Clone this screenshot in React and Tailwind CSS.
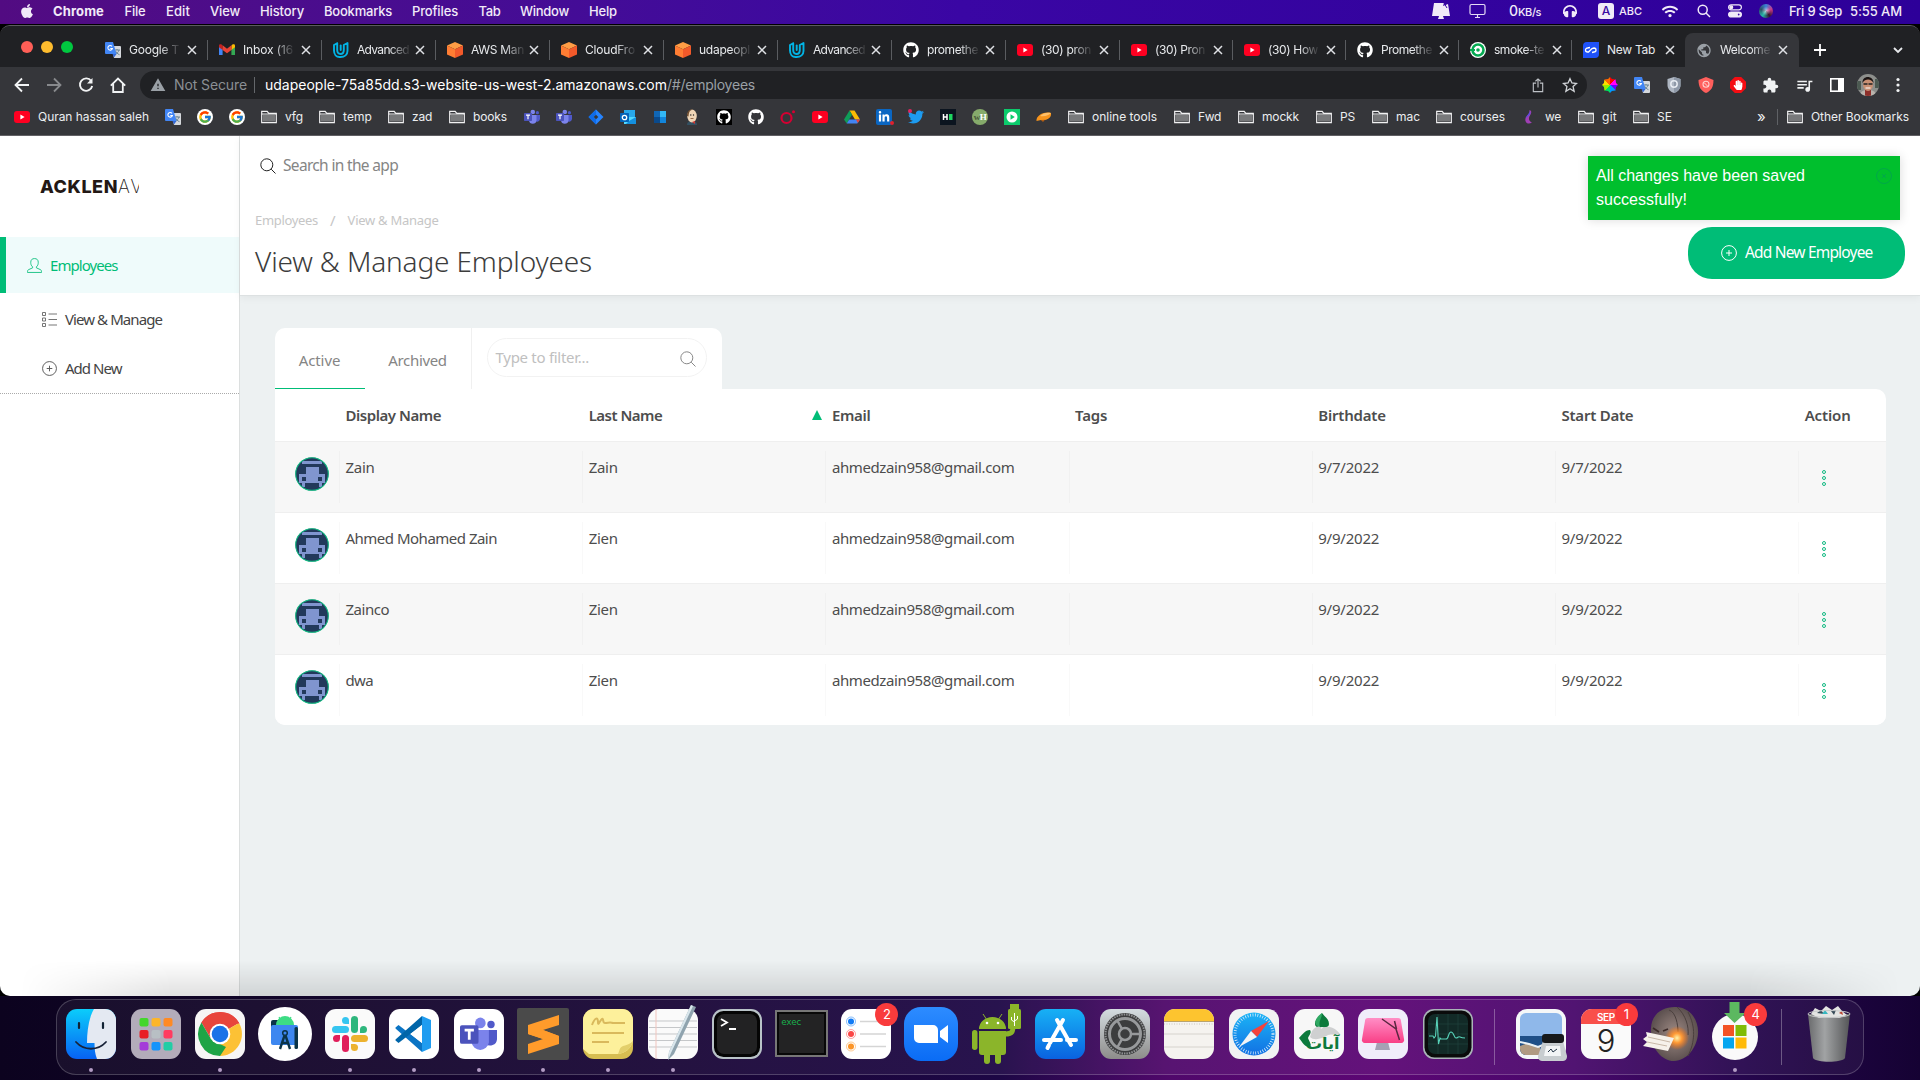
import React, { useLayoutEffect, useRef } from "react";
import { FaApple, FaGithub, FaTwitter, FaLinkedinIn, FaHeadphones, FaHandPaper, FaWifi } from "react-icons/fa";
import { FcGoogle } from "react-icons/fc";
import { MdExtension, MdOutlineQueueMusic, MdPublic, MdWarning } from "react-icons/md";

/* Text whose tracking is adjusted so that it spans a given width. */
function Fit({ w, className = "", children }) {
  const ref = useRef(null);
  useLayoutEffect(() => {
    const el = ref.current;
    el.style.letterSpacing = "0px";
    const natural = el.getBoundingClientRect().width;
    el.style.letterSpacing = `${(w - natural) / String(children).length}px`;
  }, [w, children]);
  return (
    <span ref={ref} className={`inline-block shrink-0 whitespace-pre ${className}`}>
      {children}
    </span>
  );
}

const Slot = ({ w, children, className = "" }) => (
  <div className={`flex shrink-0 items-center ${className}`} style={{ width: w }}>
    {children}
  </div>
);

/* ---------- small icons ---------- */
const YouTube = () => (
  <svg viewBox="0 0 16 16" className="size-4"><rect y="2" width="16" height="12" rx="3" fill="#ff0021" /><path d="M6.4 5.6v4.8L10.6 8z" fill="#fff" /></svg>
);
const Translate = () => (
  <svg viewBox="0 0 16 16" className="size-4">
    <path d="M6 4h9a1 1 0 0 1 1 1v10a1 1 0 0 1-1 1H9z" fill="#d5d8dc" />
    <path d="M9 8h6M12 7v1m2 0c-.5 2-2 3.500-4 4.500M10.500 9c.8 1.500 2 3 4 3.700" stroke="#607d8b" strokeWidth=".9" fill="none" />
    <path d="M1 0h7l3.500 12H1a1 1 0 0 1-1-1V1a1 1 0 0 1 1-1z" fill="#4286f5" />
    <path d="M7 4.400A2.300 2.300 0 1 0 7.400 6.500H5.300" stroke="#fff" strokeWidth="1.100" fill="none" />
    <path d="M7.500 12h4L9 15.500z" fill="#3367d6" />
  </svg>
);
const Gmail = () => (
  <svg viewBox="0 0 16 16" className="size-4">
    <path d="M0 4.500V13h3.600V7z" fill="#4285f4" /><path d="M16 4.500V13h-3.600V7z" fill="#34a853" />
    <path d="M0 3.500v1.800l3.600 2.700V3.800L2.600 2.600C1.500 2 0 2.400 0 3.500z" fill="#c5221f" />
    <path d="M16 3.500v1.800L12.400 8V3.800l1-1.200C14.500 2 16 2.400 16 3.500z" fill="#fbbc04" />
    <path d="M3.600 3.300 8 6.700l4.400-3.400V8L8 11.300 3.600 8z" fill="#ea4335" />
  </svg>
);
const Udacity = () => (
  <svg viewBox="0 0 16 16" className="size-4" fill="none" stroke="#02b3e4" strokeWidth="1.900" strokeLinejoin="round" strokeLinecap="round">
    <path d="M4.200 1.300 1 3v5.500c0 4 2.500 6.500 5.500 6.500M4.200 1.300V8c0 2.500 1.200 4 3.300 4s3.300-1.300 3.300-4V3L14.500 1v8c0 3.500-2.800 6-7 6" />
    <path d="M7.700 3.500V8" />
  </svg>
);
const Cube = () => (
  <svg viewBox="0 0 16 16" className="size-4">
    <path d="M8 0l8 3.600-8 3.600L0 3.600z" fill="#ff9d45" /><path d="M0 3.600l8 3.600V16l-8-3.600z" fill="#ff7d33" /><path d="M16 3.600L8 7.200V16l8-3.600z" fill="#f2592a" />
  </svg>
);
const Circle = () => (
  <svg viewBox="0 0 16 16" className="size-4"><circle cx="8" cy="8" r="8" fill="#fff" /><circle cx="8" cy="8" r="5.500" fill="none" stroke="#04aa51" strokeWidth="2.600" /><path d="M0 8h5" stroke="#04aa51" strokeWidth="2" /><circle cx="8" cy="8" r="1.800" fill="#04aa51" /></svg>
);
const NewTabIcon = () => (
  <svg viewBox="0 0 16 16" className="size-4"><path d="M4 0h12v12a4 4 0 0 1-4 4H0V4a4 4 0 0 1 4-4z" fill="#1f52fa" /><path d="M7 5.500 4.500 6a2 2 0 0 0 0 4h1L9 6.500 11 6a2 2 0 0 1 0 4l-2 .5" stroke="#fff" strokeWidth="1.300" fill="none" /></svg>
);
const Folder = () => (
  <svg viewBox="0 0 16 16" className="size-4"><path d="M.7 13.700V2.300h5.500l1.600 2h7.500v9.400z" fill="none" stroke="#f1f1f2" strokeWidth="1.200" /><path d="M2 5.800h12v6.600H2z" fill="#78797b" /><path d="M.7 5h14.600" stroke="#f1f1f2" /></svg>
);
const Teams = ({ className = "size-4" }) => (
  <svg viewBox="0 0 16 16" className={className}>
    <circle cx="8.800" cy="3" r="2.300" fill="#7b83eb" /><circle cx="13.400" cy="3.700" r="1.600" fill="#5059c9" />
    <path d="M11 6h5v4a3 3 0 0 1-5 2z" fill="#5059c9" /><path d="M5 6h7.500v5.500a3.800 3.800 0 0 1-7.500 0z" fill="#7b83eb" />
    <rect y="4" width="8" height="8" rx=".8" fill="#4b53bc" /><path d="M2 6.100h4M4 6v4.300" stroke="#fff" strokeWidth="1.200" />
  </svg>
);
const Jira = () => (
  <svg viewBox="0 0 16 16" className="size-4"><path d="M8 .5 15.500 8 8 15.500.5 8z" fill="#2684ff" /><path d="M8 .5v5L5.500 8 8 10.500v5L.5 8z" fill="#0f6be8" /><path d="M8 5.700 10.300 8 8 10.300 5.700 8z" fill="#35363a" /></svg>
);
const Outlook = () => (
  <svg viewBox="0 0 16 16" className="size-4"><path d="M4 1h11v7H4z" fill="#28a8ea" /><path d="M4 8h12v7H4z" fill="#50d9ff" /><path d="M9 12l7-4v7H6z" fill="#1490df" /><rect y="4" width="9" height="9" rx=".8" fill="#0364b8" /><circle cx="4.500" cy="8.500" r="2.200" fill="none" stroke="#fff" strokeWidth="1.300" /></svg>
);
const Squares = () => (
  <svg viewBox="0 0 16 16" className="size-4"><path d="M2 2h6v6H2z" fill="#1066b5" /><path d="M8 2h6v6H8z" fill="#32b8f5" /><path d="M2 8h6v6H2z" fill="#0a4a8c" /><path d="M8 8h6v6H8z" fill="#1286dc" /></svg>
);
const Jenkins = () => (
  <svg viewBox="0 0 16 16" className="size-4"><path d="M3 16c0-3 2-4 5-4s5 1 5 4z" fill="#335061" /><ellipse cx="8" cy="7" rx="4.800" ry="6.500" fill="#f0d6b7" /><path d="M3 7c0-5 2-7 6-6.500-4 1-4 3-4.500 7z" fill="#6d4c2f" /><circle cx="9.500" cy="6" r=".7" fill="#222" /><circle cx="6.800" cy="6" r=".7" fill="#222" /><path d="M6.500 9.500h3" stroke="#805030" strokeWidth=".8" /><path d="M8 13l3 2v-3z" fill="#d33833" /></svg>
);
const GithubBlack = () => <div className="flex size-4 items-center justify-center bg-black text-white"><FaGithub className="size-3.5" /></div>;
const Github = () => <FaGithub className="size-4 text-white" />;
const RedO = () => (
  <svg viewBox="0 0 16 16" className="size-4"><circle cx="6.500" cy="9" r="5" fill="none" stroke="#d50032" strokeWidth="2.200" /><circle cx="13.500" cy="2.800" r="1.500" fill="#d50032" /></svg>
);
const Drive = () => (
  <svg viewBox="0 0 16 16" className="size-4"><path d="M5.500 1.500h5L16 10.500h-5z" fill="#fbbc04" /><path d="M5.500 1.500 8 5.700 2.700 14.500 0 10.500z" fill="#0f9d58" /><path d="M5.200 10.500H16l-2.700 4H2.700z" fill="#4285f4" /><path d="M12 10.500h4l-2.200 3.500z" fill="#ea4335" /></svg>
);
const LinkedIn = () => (
  <div className="relative flex size-4 items-center justify-center rounded-[2px] bg-[#0a66c2] text-white"><FaLinkedinIn className="size-3" /><span className="absolute -right-0.5 bottom-0 size-1 rounded-full bg-[#e0202c]" /></div>
);
const Twitter = () => (
  <div className="relative size-4"><FaTwitter className="size-4 text-[#1d9bf0]" /><span className="absolute left-0 top-0 size-1 rounded-full bg-[#e0245e]" /></div>
);
const HackerRank = () => (
  <svg viewBox="0 0 16 16" className="size-4"><rect width="16" height="16" fill="#0b141f" /><path d="M3.500 5v6M7 5v6M3.500 8H7" stroke="#fff" strokeWidth="1.500" /><path d="M9 5h3.500v6H9z" fill="#1ed760" /></svg>
);
const WH = () => (
  <div className="flex size-4 items-center justify-center rounded-full bg-[#86ab6b] font-['Liberation_Serif',serif] text-[9px] font-bold leading-none tracking-tighter text-white"><span className="text-[#46593a]">w</span>H</div>
);
const GreenPlay = () => (
  <svg viewBox="0 0 16 16" className="size-4"><rect width="16" height="16" fill="#0ccb6c" /><circle cx="8" cy="8" r="5.500" fill="#fff" /><path d="M6.500 5.300v5.400L10.800 8z" fill="#0ccb6c" /></svg>
);
const Saucer = () => (
  <svg viewBox="0 0 16 16" className="size-4"><path d="M.5 12C0 7 7 2 15 4c1 5-5 8-10 7z" fill="#f7941d" /><path d="M4 7c3-3 7-4 11-3-2 2-6 4-11 3z" fill="#ffc06a" /><path d="M5 11l2 2 2-2.200z" fill="#b75e10" /></svg>
);
const Flame = () => (
  <svg viewBox="0 0 16 16" className="size-4"><path d="M8.500 1c3 1 1.500 4 .5 5.500C7 9.500 8 12 11 13.500 7 16 3.500 13.500 4.500 9.500 5.200 7 9 5 8.500 1z" fill="#a03fb5" /><path d="M8.500 1c1.500 3-3 5-4 8.500C6 7.500 9 6.500 9.500 4z" fill="#5b4de0" /></svg>
);

/* icon, visible title, title width */
const tabs = [
  [<Translate />, "Google T", 50], [<Gmail />, "Inbox (16", 50], [<Udacity />, "Advanced", 52], [<Cube />, "AWS Man", 53],
  [<Cube />, "CloudFro", 50], [<Cube />, "udapeopl", 51], [<Udacity />, "Advanced", 52], [<Github />, "promethe", 51],
  [<YouTube />, "(30) pron", 50], [<YouTube />, "(30) Pron", 50], [<YouTube />, "(30) How", 50], [<Github />, "Promethe", 51], [<Circle />, "smoke-te", 50],
  [<NewTabIcon />, "New Tab", 48], [<MdPublic className="size-[17px] text-[#9aa0a6]" />, "Welcome", 50],
];

/* icon, label, left edge, label width */
const bookmarks = [
  [<YouTube />, "Quran hassan saleh", 14, 111], [<Translate />, "", 165], [<FcGoogle className="size-4 rounded-full bg-white p-px" />, "", 197],
  [<FcGoogle className="size-4 rounded-full bg-white p-px" />, "", 229], [<Folder />, "vfg", 261, 18], [<Folder />, "temp", 319, 29],
  [<Folder />, "zad", 388, 20], [<Folder />, "books", 449, 34], [<Teams />, "", 524], [<Teams />, "", 556], [<Jira />, "", 588],
  [<Outlook />, "", 620], [<Squares />, "", 652], [<Jenkins />, "", 684], [<GithubBlack />, "", 716], [<Github />, "", 748],
  [<RedO />, "", 780], [<YouTube />, "", 812], [<Drive />, "", 844], [<LinkedIn />, "", 876], [<Twitter />, "", 908],
  [<HackerRank />, "", 940], [<WH />, "", 972], [<GreenPlay />, "", 1004], [<Saucer />, "", 1036], [<Folder />, "online tools", 1068, 65],
  [<Folder />, "Fwd", 1174, 23], [<Folder />, "mockk", 1238, 37], [<Folder />, "PS", 1316, 15], [<Folder />, "mac", 1372, 24],
  [<Folder />, "courses", 1436, 45], [<Flame />, "we", 1521, 16], [<Folder />, "git", 1578, 15], [<Folder />, "SE", 1633, 15],
];

const menus = [["File", 41.5, 21], ["Edit", 44, 24], ["View", 50, 30], ["History", 64, 44], ["Bookmarks", 88, 68], ["Profiles", 66.5, 46], ["Tab", 41.5, 22], ["Window", 69, 49], ["Help", 40, 28]];

function MenuBar() {
  return (
    <div className="flex h-6 shrink-0 items-center bg-linear-to-r from-[#520b82] via-[#3a06a4] to-[#2d0099] pb-[1.500px] pl-[19px] text-[13px] font-medium leading-none text-[#f1eaf8]">
      <Slot w={34}><FaApple className="size-4" /></Slot>
      <Slot w={71.5}><Fit w={51} className="font-bold">Chrome</Fit></Slot>
      {menus.map(([t, s, w]) => <Slot key={t} w={s}><Fit w={w}>{t}</Fit></Slot>)}
      <div className="grow" />
      <Slot w={38}>
        <svg viewBox="0 0 20 18" className="h-[18px] w-5" fill="#f1eaf8"><path d="M3 1h10l-1 3 5-2 2 12H1z" /><path d="M8 14h4l1 3H7z" /><path d="M13 1l3 5" stroke="#3a06a4" /></svg>
      </Slot>
      <Slot w={40}>
        <svg viewBox="0 0 18 16" className="h-4 w-[18px]" fill="none" stroke="#e6dcf5" strokeWidth="1.200"><rect x="1" y="1.500" width="15" height="10" rx="1.500" /><path d="M6 14.500h5M8.500 11.500v3" /></svg>
      </Slot>
      <Slot w={54}><Fit w={9} className="text-[14px]">0</Fit><Fit w={23} className="mt-0.5 text-[11px]">KB/s</Fit></Slot>
      <Slot w={35}><FaHeadphones className="size-3.5" /></Slot>
      <Slot w={63}><span className="mr-[5px] flex size-4 items-center justify-center rounded-[3px] bg-[#f1eaf8] text-[12px] text-[#3a0aa0]">A</span><Fit w={23} className="text-[11px]">ABC</Fit></Slot>
      <Slot w={36}><FaWifi className="h-[13px] w-[18px]" /></Slot>
      <Slot w={31}>
        <svg viewBox="0 0 14 14" className="size-3.5" fill="none" stroke="#f1eaf8" strokeWidth="1.500"><circle cx="5.700" cy="5.700" r="4.500" /><path d="M9 9l4 4" /></svg>
      </Slot>
      <Slot w={31}>
        <svg viewBox="0 0 14 14" className="size-3.5" fill="none" stroke="#f1eaf8" strokeWidth="1.200"><rect x=".6" y=".8" width="12.800" height="5" rx="2.500" /><circle cx="3.300" cy="3.300" r="1.400" fill="#f1eaf8" /><rect x=".6" y="8" width="12.800" height="5" rx="2.500" fill="#f1eaf8" /><circle cx="10.700" cy="10.500" r="1.500" fill="#3a06a4" /></svg>
      </Slot>
      <Slot w={30}><span className="size-3.5 rounded-full bg-[radial-gradient(circle,#fff9_0%,transparent_45%),conic-gradient(#3b82d8,#c93b8a,#33142e,#28b6a8,#2a4f66,#3b82d8)]" /></Slot>
      <Slot w={61}><Fit w={53}>Fri 9 Sep</Fit></Slot>
      <Slot w={70}><Fit w={52}>5:55 AM</Fit></Slot>
    </div>
  );
}

const XIcon = () => <svg viewBox="0 0 10 10" className="size-2.5" stroke="#dfe1e5" strokeWidth="1.500"><path d="M1 1l8 8M9 1L1 9" /></svg>;

function TabStrip() {
  return (
    <div className="flex h-[41px] shrink-0 items-end bg-[#202124]">
      <div className="flex h-[41px] w-[93.500px] shrink-0 items-center gap-2 pl-[21px]">
        <span className="size-3 rounded-full bg-[#ff5f57]" /><span className="size-3 rounded-full bg-[#febc2e]" /><span className="size-3 rounded-full bg-[#00c840]" />
      </div>
      {tabs.map(([icon, label, w], i) => {
        const active = i === 14;
        return (
          <div key={i} className={`flex h-[34px] shrink-0 items-center pl-[11.500px] ${i < 9 || active ? "w-[114px]" : "w-[113px]"} ${active ? "rounded-t-lg bg-[#35363a]" : ""}`}>
            <span className="flex w-4 shrink-0 justify-center">{icon}</span>
            <span className="ml-2 flex w-[50px] shrink-0 text-[12px] leading-4 text-[#e8eaed]">
              <Fit w={w} className={label === "New Tab" ? "" : "[mask-image:linear-gradient(90deg,#000_62%,rgba(0,0,0,0.1))]"}>{label}</Fit>
            </span>
            <span className="ml-[7.500px]"><XIcon /></span>
            {i < 13 && <span className="ml-auto h-5 w-px bg-[#5a5c60]" />}
          </div>
        );
      })}
      <div className="flex h-[34px] grow items-center justify-between pl-[14px] pr-4">
        <svg viewBox="0 0 14 14" className="size-3.5" stroke="#fff" strokeWidth="1.800"><path d="M7 1v12M1 7h12" /></svg>
        <svg viewBox="0 0 12 12" className="size-3" stroke="#e8eaed" strokeWidth="1.800" fill="none"><path d="M2 4l4 4 4-4" /></svg>
      </div>
    </div>
  );
}

function Toolbar() {
  return (
    <div className="flex h-9 shrink-0 items-center bg-[#35363a] pl-[14px]">
      <Slot w={32}><svg viewBox="0 0 16 16" className="size-4" fill="none" stroke="#f1f3f4" strokeWidth="1.800"><path d="M15 8H2M8 1.500 1.500 8 8 14.500" /></svg></Slot>
      <Slot w={32}><svg viewBox="0 0 16 16" className="size-4" fill="none" stroke="#87898c" strokeWidth="1.800"><path d="M1 8h13M8 1.500 14.500 8 8 14.500" /></svg></Slot>
      <Slot w={32}><svg viewBox="0 0 16 16" className="size-4" fill="none" stroke="#f1f3f4" strokeWidth="1.900"><path d="M13.200 4A6.200 6.200 0 1 0 14.200 9" /><path d="M14.500 1v5.500H9z" fill="#f1f3f4" stroke="none" /></svg></Slot>
      <Slot w={30}><svg viewBox="0 0 16 16" className="size-4" fill="none" stroke="#f1f3f4" strokeWidth="1.800"><path d="M.8 8.700 8 1.500l7.200 7.200M3.200 7v8h9.600V7" /></svg></Slot>
      <div className="flex h-7 w-[1447px] shrink-0 items-center rounded-full bg-[#202124] pl-[10px] text-[14px] leading-none">
        <MdWarning className="size-4 text-[#9aa0a6]" />
        <Fit w={73} className="ml-2 text-[#8b8f94]">Not Secure</Fit>
        <span className="ml-[7px] mr-[10px] h-4 w-px bg-[#64676b]" />
        <Fit w={402} className="text-white">udapeople-75a85dd.s3-website-us-west-2.amazonaws.com</Fit>
        <Fit w={88} className="text-[#9aa0a6]">/#/employees</Fit>
        <div className="ml-auto flex items-center gap-[17px] pr-[9px]">
          <svg viewBox="0 0 14 16" className="h-[15px] w-3.5" fill="none" stroke="#bdc1c6" strokeWidth="1.200"><path d="M5 5.500H2v9h10v-9H9M7 10V1M4.300 3.500 7 1l2.700 2.500" /></svg>
          <svg viewBox="0 0 24 24" className="size-4" fill="none" stroke="#d0d3d7" strokeWidth="2"><path d="M12 2.500l2.900 6.500 7 .7-5.300 4.700 1.600 7L12 17.700l-6.200 3.700 1.600-7L2.100 9.700l7-.7z" /></svg>
        </div>
      </div>
      <div className="flex grow items-center justify-between pl-[15px] pr-4">
        <span className="size-4 bg-[conic-gradient(#f00_0_12%,#f0f_12%_25%,#60f_25%_37%,#09f_37%_50%,#0d6_50%_62%,#9e0_62%_75%,#fd0_75%_87%,#f60_87%)] [clip-path:polygon(50%_0,62%_12%,85%_15%,88%_38%,100%_50%,88%_62%,85%_85%,62%_88%,50%_100%,38%_88%,15%_85%,12%_62%,0_50%,12%_38%,15%_15%,38%_12%)]" />
        <Translate />
        <svg viewBox="0 0 16 16" className="size-4"><path d="M8 0l6.500 2v6c0 4-3 7-6.500 8-3.500-1-6.500-4-6.500-8V2z" fill="#aeb6c2" /><path d="M8 0l6.500 2v6c0 4-3 7-6.500 8z" fill="#8f99a8" /><circle cx="8" cy="7" r="3.200" fill="none" stroke="#e8ecf2" strokeWidth="1.500" /></svg>
        <svg viewBox="0 0 16 16" className="size-4"><path d="M8 0l7.500 3c0 7-2.500 11-7.500 13C3 14 .5 10 .5 3z" fill="#ff5f5c" /><circle cx="8" cy="7.300" r="3" fill="none" stroke="#ffd0ce" strokeWidth="1.100" /><path d="M6 5.500l4 4" stroke="#ffd0ce" /></svg>
        <span className="flex size-4 items-center justify-center bg-[#f40d12] text-white [clip-path:polygon(30%_0,70%_0,100%_30%,100%_70%,70%_100%,30%_100%,0_70%,0_30%)]"><FaHandPaper className="size-2.5" /></span>
        <MdExtension className="size-[17px] text-[#f1f3f4]" />
        <MdOutlineQueueMusic className="size-[19px] text-[#f1f3f4]" />
        <svg viewBox="0 0 14 14" className="size-3.5"><rect x=".8" y=".8" width="12.400" height="12.400" fill="none" stroke="#fff" strokeWidth="1.600" /><path d="M8 1h5v12H8z" fill="#fff" /></svg>
        <svg viewBox="0 0 24 24" className="-mx-1 size-6"><defs><clipPath id="me"><circle cx="12" cy="12" r="11" /></clipPath></defs><g clipPath="url(#me)"><path d="M0 0h24v24H0z" fill="#8d8f8c" /><path d="M0 8h5v9H0zM19 6h5v9h-5z" fill="#4c5a52" /><path d="M3 24c1-6 5-7 9-7s8 1 9 7z" fill="#b9b4ad" /><path d="M9 17h6v7H9z" fill="#8d2f2a" /><ellipse cx="12" cy="11.500" rx="5" ry="6.500" fill="#c98f73" /><path d="M6.500 10c-.5-8 11-8 11 0-2-4-8-5-11 0z" fill="#1c1413" /><path d="M7.500 11h4M12.500 11h4" stroke="#222" strokeWidth="1.500" /><path d="M9.500 15h5" stroke="#fff" /></g></svg>
        <svg viewBox="0 0 4 16" className="h-4 w-3" fill="#f1f3f4"><circle cx="2" cy="2.500" r="1.600" /><circle cx="2" cy="8" r="1.600" /><circle cx="2" cy="13.500" r="1.600" /></svg>
      </div>
    </div>
  );
}

function BookmarkBar() {
  return (
    <div className="flex h-[33px] shrink-0 items-center border-b border-[#626165] bg-[#35363a] pb-1 pl-[14px] text-[12px] leading-none text-[#eceef0]">
      {bookmarks.map(([icon, label, x, w], i) => (
        <Slot key={i} w={(bookmarks[i + 1] ? bookmarks[i + 1][2] : 1757) - x}>
          {icon}
          {label && <Fit w={w} className="ml-2 leading-4">{label}</Fit>}
        </Slot>
      ))}
      <Slot w={20}><span className="-mt-0.5 text-[15px] leading-none">»</span></Slot>
      <Slot w={10}><span className="h-4 w-px bg-[#5f6165]" /></Slot>
      <Folder />
      <Fit w={98} className="ml-2 leading-4">Other Bookmarks</Fit>
    </div>
  );
}

/* ---------- page ---------- */
const Magnifier = ({ color, className }) => (
  <svg viewBox="0 0 16 16" className={className} fill="none" stroke={color}><circle cx="6.800" cy="6.800" r="6" /><path d="M11.200 11.200 15.500 15.500" /></svg>
);
const PlusCircle = ({ className }) => (
  <svg viewBox="0 0 16 16" className={className} fill="none" stroke="currentColor"><circle cx="8" cy="8" r="7.400" /><path d="M8 5v6M5 8h6" /></svg>
);

function Sidebar() {
  return (
    <aside className="flex w-60 shrink-0 flex-col border-r border-[#dcdfdf] bg-white text-[15px] leading-none text-[#444]">
      <div className="flex h-[101px] items-center pl-10 pt-[1px]">
        <div className="flex w-[99px] overflow-hidden font-[Inter,sans-serif] text-[18px] text-[#231815]"><Fit w={78} className="font-extrabold">ACKLEN</Fit><Fit w={26} className="font-extralight">AV</Fit></div>
      </div>
      <div className="flex h-14 items-center border-l-[6px] border-[#00bd77] bg-[#effbfb] pl-[21px] text-[#00bd77]">
        <svg viewBox="0 0 16 16" className="size-[15px]" fill="none" stroke="currentColor" strokeWidth=".9"><path d="M6 9.500C4.300 8 4 6.500 4 4.500 4 2 5.500.6 8 .6s4 1.400 4 3.900c0 2-.3 3.500-2 5v1l4.500 2c1 .6 1 1.600 1 2.900H.5c0-1.300 0-2.300 1-2.900L6 10.500z" /></svg>
        <Fit w={67.5} className="ml-2">Employees</Fit>
      </div>
      <div className="flex h-[52px] items-center pl-[42px]">
        <svg viewBox="0 0 15 15" className="size-[15px]" fill="none" stroke="#666" strokeWidth=".9"><path d="M.5.5h3v3h-3zM.5 6h3v3h-3zM.5 11.500h3v3h-3zM6.500 2H15M6.500 7.500H15M6.500 13H15" /></svg>
        <Fit w={97} className="ml-2">View &amp; Manage</Fit>
      </div>
      <div className="flex h-[49px] items-center border-b border-dotted border-[#aaa] pb-0.5">
        <PlusCircle className="ml-[42px] size-[15px] text-[#555]" />
        <Fit w={56.5} className="ml-2">Add New</Fit>
      </div>
    </aside>
  );
}

function Header() {
  return (
    <header className="relative z-10 flex h-[160px] shrink-0 flex-col border-b border-[#dde1e2] bg-white px-[15px] leading-none shadow-[0_2px_8px_rgba(0,0,0,0.05)]">
      <div className="flex h-[59px] items-center pl-[5px]">
        <Magnifier color="#222" className="size-4" />
        <Fit w={115} className="ml-[7px] text-[15.500px] text-[#858585]">Search in the app</Fit>
      </div>
      <div className="flex grow">
        <div className="flex flex-col">
          <div className="mt-[18px] flex h-[14px] items-center text-[13px] text-[#c6c6c6]">
            <Fit w={63}>Employees</Fit><span className="mx-3 text-[15px]">/</span><Fit w={91}>View &amp; Manage</Fit>
          </div>
          <h1 className="mt-[20px] text-[28px] font-light text-[#3c3c3c]"><Fit w={337}>View &amp; Manage Employees</Fit></h1>
        </div>
        <button className="ml-auto mt-[32px] flex h-[52px] w-[217px] items-center rounded-[24px] bg-[#00bd77] pl-[33px] text-[15.500px] text-white">
          <PlusCircle className="size-4" /><Fit w={127.5} className="ml-2">Add New Employee</Fit>
        </button>
      </div>
    </header>
  );
}

const Avatar = () => (
  <svg viewBox="0 0 34 34" className="size-[34px]">
    <defs><clipPath id="bot"><circle cx="17" cy="17" r="16" /></clipPath></defs>
    <circle cx="17" cy="17" r="16.500" fill="#22395b" />
    <g clipPath="url(#bot)" fill="#8095cf"><path d="M7 4h20v3H7zM11 10h13v7h6v9h-3v4h-3v-4H10v4H7v-4H4v-9h7z" /><path d="M7 20h4v4H7zM23 20h4v4h-4z" fill="#22395b" /></g>
    <circle cx="17" cy="17" r="16.300" fill="none" stroke="#10b981" strokeWidth="1.100" />
  </svg>
);

const grid = "grid grid-cols-[65.500px_repeat(6,243.200px)_1fr]";
const rows = [["Zain", 29, "Zain", "9/7/2022"], ["Ahmed Mohamed Zain", 151.5, "Zien", "9/9/2022"], ["Zainco", 43.5, "Zien", "9/9/2022"], ["dwa", 27.5, "Zien", "9/9/2022"]];
const heads = [["Display Name", 95.5], ["Last Name", 73.5], ["Email", 38.5], ["Tags", 32], ["Birthdate", 67.5], ["Start Date", 72], ["Action", 46]];

function Employees() {
  return (
    <main className="flex grow flex-col bg-[#edf1f2] pl-[34.500px] pr-[34px] pt-[32px] text-[15px] leading-none text-[#4d4d4d]">
      <div className="flex h-[61px] w-[447px] overflow-hidden rounded-t-[10px] bg-white text-[#858585]">
        <div className="flex w-[90px] items-center justify-center border-b border-[#00bd77] pt-1"><Fit w={41.5}>Active</Fit></div>
        <div className="flex w-[107px] items-center justify-center border-r border-[#f0f0f0] pt-1"><Fit w={58.5}>Archived</Fit></div>
        <div className="ml-[15px] mt-[10px] flex h-[39px] w-[220px] items-center justify-between rounded-full border border-[#f2f2f2] pl-2 pr-[10px] text-[#c0c0c0]">
          <Fit w={93.5}>Type to filter...</Fit><Magnifier color="#888" className="mt-0.5 size-4" />
        </div>
      </div>
      <div className="overflow-hidden rounded-b-[10px] rounded-tr-[10px] bg-white">
        <div className={`${grid} h-[52px] items-center font-semibold`}>
          <span />
          {heads.map(([h, w], i) => (
            <div key={h} className="flex items-center justify-between pl-[5.500px] pr-[4px]">
              <Fit w={w}>{h}</Fit>
              {i === 1 && <svg viewBox="0 0 10 10" className="size-[10px]"><path d="M5 0l5 10H0z" fill="#00bd77" /></svg>}
            </div>
          ))}
        </div>
        {rows.map(([first, w, last, date], i) => (
          <div key={i} className={`${grid} h-[71px] border-t border-[#efefef] py-[9px] ${i % 2 ? "bg-white" : "bg-[#f7f7f7]"}`}>
            <div className="flex justify-end border-r border-black/[0.025] pr-2.5 pt-[6px]"><Avatar /></div>
            {[[first, w], [last, 29], ["ahmedzain958@gmail.com", 182.5], ["", 0], [date, 61], [date, 61]].map(([t, tw], j) => (
              <div key={j} className="border-r border-black/[0.025] pl-[5.500px] pt-[9px]">{t && <Fit w={tw}>{t}</Fit>}</div>
            ))}
            <div className="pl-[22px] pt-[18px]">
              <svg viewBox="0 0 6 18" className="h-[18px] w-1.5" fill="none" stroke="#10b981"><circle cx="3" cy="3" r="1.500" /><circle cx="3" cy="9" r="1.500" /><circle cx="3" cy="15" r="1.500" /></svg>
            </div>
          </div>
        ))}
      </div>
    </main>
  );
}

/* ---------- dock ---------- */
const Tile = ({ fill = "#fff", children, id }) => (
  <svg viewBox="0 0 50 50" className="size-[50px] overflow-visible"><defs><clipPath id={id}><rect width="50" height="50" rx="11" /></clipPath></defs><rect width="50" height="50" rx="11" fill={fill} /><g clipPath={`url(#${id})`}>{children}</g></svg>
);
const Grad = ({ id, a, b }) => <defs><linearGradient id={id} x2="0" y2="1"><stop stopColor={a} /><stop offset="1" stopColor={b} /></linearGradient></defs>;
const Badge = ({ children }) => <span className="absolute -right-[7px] -top-1.5 flex size-[23px] items-center justify-center rounded-full bg-[#f93b3c] text-[13px] leading-none text-white">{children}</span>;

const Finder = () => (
  <Tile id="fi" fill="url(#fig)"><Grad id="fig" a="#0bcdfb" b="#0762f3" /><path d="M28 0h22v50H31c-2-5-2.500-10-2.500-16H21C21 22 23 8 28 0z" fill="#e4e9f2" /><path d="M13 14v5M37 14v5" stroke="#123" strokeWidth="2.200" strokeLinecap="round" /><path d="M10 33c8 9 22 9 30 0" fill="none" stroke="#182238" strokeWidth="1.800" strokeLinecap="round" /></Tile>
);
const launch = ["#44d62c", "#fdb52a", "#ff8a24", "#e81e25", "#b8bfc4", "#ff3b60", "#a43bd8", "#1494fb", "#22cda5"];
const Launchpad = () => <Tile id="lp" fill="#b3acba">{launch.map((c, i) => <rect key={i} x={8.5 + (i % 3) * 12} y={9 + Math.floor(i / 3) * 12} width="9" height="8.500" rx="2" fill={c} />)}</Tile>;
const Chrome = () => (
  <Tile id="ch" fill="#f6f5f5">
    <path d="M25 25 6.400 13.500A22 22 0 0 1 44 14z" fill="#e8453c" /><path d="M25 25l19-11a22 22 0 0 1-19 33z" fill="#fcc135" /><path d="M25 14.500h19.500A22 22 0 0 0 6.400 13.500L16 30z" fill="#e8453c" /><path d="M6.400 13.500 16 30l9 5 6 3-6 9A22 22 0 0 1 6.400 13.500z" fill="#1ea446" /><circle cx="25" cy="25" r="10.300" fill="#fff" /><circle cx="25" cy="25" r="8.300" fill="#1a73e8" />
  </Tile>
);
const Studio = () => (
  <svg viewBox="0 0 54 54" className="size-[54px]"><circle cx="27" cy="27" r="27" fill="#fff" /><rect x="13" y="13" width="8" height="16" rx="2" fill="#0b3448" /><rect x="13" y="18" width="27" height="20" rx="2" fill="#3d87f0" /><path d="M18 18a9 9 0 0 1 18 0z" fill="#3ddc84" /><path d="M21 10l2 3M33 10l-2 3" stroke="#3ddc84" strokeWidth="1.300" /><path d="M27 27l-5 15M27 27l5 15M24 36h6" stroke="#0b3448" strokeWidth="2.400" /><circle cx="27" cy="26" r="2.300" fill="#3d87f0" stroke="#0b3448" strokeWidth="1.500" /><rect x="36.500" y="20" width="3.500" height="22" rx="1.500" fill="#0b3448" /></svg>
);
const Slack = () => (
  <Tile id="sl" fill="#fafafa">
    <g fill="#36c5f0"><rect x="7" y="17" width="17" height="7" rx="3.500" /><path d="M24 15h-3.500a3.500 3.500 0 1 1 3.500-3.500z" /></g><g fill="#2eb67d"><rect x="26" y="7" width="7" height="17" rx="3.500" /><path d="M35 24v-3.500a3.500 3.500 0 1 1 3.500 3.500z" /></g>
    <g fill="#ecb22e"><rect x="26" y="26" width="17" height="7" rx="3.500" /><path d="M26 35h3.500a3.500 3.500 0 1 1-3.500 3.500z" /></g><g fill="#e01e5a"><rect x="17" y="26" width="7" height="17" rx="3.500" /><path d="M15 26v3.500a3.500 3.500 0 1 1-3.500-3.500z" /></g>
  </Tile>
);
const VSCode = () => <Tile id="vs"><path d="M9.500 16 6.500 18.500v1L33 43v-9z" fill="#0b74c4" /><path d="M9.500 34 6.500 31.500v-1L33 7v9z" fill="#0065a9" /><path d="M33 7l9 4v28l-9 4z" fill="#1f9cf0" /><path d="M33 16v18L21.500 25z" fill="#fff" /></Tile>;
const TeamsDock = () => <div className="flex size-[50px] items-center justify-center rounded-[11px] bg-white"><Teams className="size-[37px]" /></div>;
const Sublime = () => <svg viewBox="0 0 52 52" className="size-[52px]"><rect width="52" height="52" rx="2" fill="#4a4a4a" /><path d="M11 17 42 7v10L26 22l16 6v8L11 46V36l15-5-15-5z" fill="#ff9b2b" /><path d="M26 31l-15-5 15-4 16 6v8z" fill="#ff9b2b" /></svg>;
const Stickies = () => <Tile id="st" fill="#d6bd51"><path d="M0 0h50v32c-2 8-8 12-15 13H6L0 40z" fill="#fdf09b" /><path d="M50 32c-2 8-8 12-15 13 2-4 1-6 5-8 4-1 7-2 10-5z" fill="#e3cf6b" /><path d="M9 16c3-8 6-8 6-3s2-2 4-3 0 5 4 4 5-1 7 0h12M9 24h32M9 33h17" fill="none" stroke="#d9b95c" strokeWidth="2" /></Tile>;
const TextEdit = () => (
  <svg viewBox="0 0 50 50" className="size-[50px] overflow-visible"><rect width="50" height="50" rx="11" fill="#fafafa" /><path d="M1 12h48M1 18.500h48M1 25h48M1 31.500h48M1 38h48" stroke="#c5c7c9" /><path d="M8 0v50" stroke="#f0c4bd" /><path d="M43-4l5 2-22 47-6 6 1-8z" fill="#8fa3ae" /><path d="M43-4l2 1-22 47-3 7 1-8z" fill="#d9e6ec" /></svg>
);
const Terminal = () => <Tile id="te" fill="#b9c3c8"><rect x="2" y="2" width="46" height="46" rx="9.500" fill="#050505" /><rect x="5" y="5" width="40" height="40" rx="7" fill="#222223" /><path d="M9 10l6 3.500-6 3.500M17 20h7" fill="none" stroke="#fff" strokeWidth="1.800" /></Tile>;
const Exec = () => <div className="mb-[1px] flex h-[47px] w-[53px] items-start border-2 border-[#777] bg-[#232324] pl-1 pt-1.5 font-['DejaVu_Sans_Mono',monospace] text-[9px] leading-none tracking-[-0.500px] text-[#19b04c] shadow-[inset_0_0_0_2px_#080808]">exec</div>;
const Reminders = () => (
  <div className="relative"><Tile id="re">{["#127bf5", "#fb4747", "#fb9528"].map((c, i) => <g key={c}><circle cx="10" cy={12.5 + i * 12.5} r="4.500" fill="none" stroke={c} strokeOpacity=".5" strokeWidth="1" /><circle cx="10" cy={12.5 + i * 12.5} r="3" fill={c} /><path d={`M19 ${12.5 + i * 12.5}h26`} stroke="#d5d5d5" strokeWidth="1.300" /></g>)}</Tile><Badge>2</Badge></div>
);
const Zoom = () => <svg viewBox="0 0 54 54" className="size-[54px]"><Grad id="zo" a="#2d8cff" b="#0a6cf5" /><rect width="54" height="54" rx="17" fill="url(#zo)" /><path d="M10 18h19a5 5 0 0 1 5 5v13H15a5 5 0 0 1-5-5zM36 24l8-6v18l-8-6z" fill="#fff" /></svg>;
const Droid = () => (
  <svg viewBox="0 0 50 60" className="h-[60px] w-[50px]" fill="#8bb52a"><path d="M8 25a13.500 12 0 0 1 27 0zM8 27h27v21a3 3 0 0 1-3 3H11a3 3 0 0 1-3-3z" /><path d="M12 10l4 6M31 10l-4 6" stroke="#8bb52a" /><rect x="1" y="26" width="5.500" height="20" rx="2.700" /><rect x="13" y="46" width="6" height="14" rx="3" /><rect x="24" y="46" width="6" height="14" rx="3" /><path d="M34 30c8 0 8-3 8-9" fill="none" stroke="#8bb52a" strokeWidth="5" /><rect x="37" y="5" width="13" height="20" rx="1.500" /><rect x="39" y="0" width="9" height="6" /><path d="M43.500 22V9M40.500 13v3l3 2M46.500 12v3l-3 2" stroke="#fff" fill="none" /><circle cx="16" cy="19" r="1.300" fill="#fff" /><circle cx="27" cy="19" r="1.300" fill="#fff" /></svg>
);
const AppStore = () => <Tile id="as" fill="url(#asg)"><Grad id="asg" a="#17b1f5" b="#0a62e0" /><path d="M28 11 15 34M22 11l14 25M9 31h17M32 31h9M14 36l-1.500 3" stroke="#fff" strokeWidth="4" strokeLinecap="round" /></Tile>;
const Settings = () => (
  <Tile id="se" fill="url(#seg)"><Grad id="seg" a="#d4dce0" b="#8d8c8a" /><circle cx="25" cy="25" r="21" fill="#3c3d3e" /><circle cx="25" cy="25" r="19.500" fill="none" stroke="#8f9193" strokeWidth="2" strokeDasharray="1.500 1" /><circle cx="25" cy="25" r="15.500" fill="none" stroke="#97999b" strokeWidth="3" /><circle cx="25" cy="25" r="6" fill="none" stroke="#97999b" strokeWidth="2.500" /><path d="M31 25h10M22 20l-5-9M22 30l-5 9" stroke="#97999b" strokeWidth="2.500" /></Tile>
);
const Notes = () => <Tile id="no" fill="#f5f3ef"><path d="M0 0h50v13H0z" fill="#fdc42f" /><path d="M0 12.500h50" stroke="#b9a36d" /><path d="M0 15h50" stroke="#c9c6c0" strokeDasharray="1 1.500" /><path d="M0 25h50M0 38h50" stroke="#d6d3cd" /></Tile>;
const Safari = () => <Tile id="sa" fill="#f1f2f3"><Grad id="sag" a="#1bb4f6" b="#1270e3" /><circle cx="25" cy="25" r="21.500" fill="url(#sag)" /><circle cx="25" cy="25" r="19" fill="none" stroke="#d5ebfb" strokeWidth="3" strokeDasharray=".8 1.700" /><path d="M40 12 28 28l-6-6z" fill="#f5433c" /><path d="M10 38l12-16 6 6z" fill="#f2f4f6" /></Tile>;
const Ayat = () => (
  <div className="relative"><Tile id="ay" fill="#f7f7f7"><path d="M28 4c3 4 7 6 7 11 0 3-3 4-7 3-4 1-7 0-7-3 0-5 4-7 7-11z" fill="#0c7a3c" /><path d="M28 4c0 6-4 8-2 14-5 0-8-7 2-14z" fill="#2fa862" /><path d="M5 29c3-3 6-8 11-8 2 3-1 5-2 8 1 3 4 6 2 10-5-1-8-6-11-10z" fill="#0c7a3c" /><path d="M18 22c5-6 9-5 9-2 5-4 13-3 19 5-4 1-8 0-12 1-6 4-14 6-18 2z" fill="#cfd0d1" /></Tile><span className="absolute bottom-[5px] right-1 font-['DejaVu_Sans',sans-serif] text-[16px] font-bold leading-[20px] text-[#0c7a3c]">آيات</span></div>
);
const CleanMac = () => <Tile id="cm" fill="#f0edfa"><Grad id="cmg" a="#ff8ec6" b="#f93f86" /><path d="M19 33h11l2 8H17z" fill="#a5a1b4" /><path d="M10 9h30a3 3 0 0 1 3 3l3 18a3 3 0 0 1-3 4H7a3 3 0 0 1-3-4l3-18a3 3 0 0 1 3-3z" fill="url(#cmg)" /><path d="M24 10l14 10 3.500 11M36.500 12l2 8" stroke="#5b2741" strokeWidth="1.500" fill="none" /></Tile>;
const Activity = () => <Tile id="ac" fill="#aab4b8"><rect x="1.500" y="1.500" width="47" height="47" rx="10" fill="#0a0b0b" /><rect x="5" y="5" width="40" height="40" rx="7" fill="#122a27" /><path d="M5 15h40M5 25h40M5 35h40M15 5v40M25 5v40M35 5v40" stroke="#1f423d" strokeWidth=".7" /><path d="M6 27h4l1 2 1.500-2L14 8l1.500 27 1.500-6 1 1h5c3 0 2-7 5-7s3 6 5 6 2-2 4-1 2 1 5 1" fill="none" stroke="#57d2b8" strokeWidth="1.100" /></Tile>;
const Preview = () => (
  <svg viewBox="0 0 50 50" className="size-[50px] overflow-visible"><rect width="50" height="50" rx="11" fill="#f5f7f8" /><rect x="4" y="4" width="42" height="42" rx="6" fill="#8fb8ea" /><path d="M4 27h42v13a6 6 0 0 1-6 6H10a6 6 0 0 1-6-6z" fill="#1f4f87" /><path d="M4 37l8-3 12 4v8H10a6 6 0 0 1-6-6z" fill="#b09a82" /><path d="M4 33l9 2 9 3 5-2" stroke="#e9f1f7" strokeWidth="2" fill="none" /><path d="M27 32h20l4 15c0 4-2 5-5 5H27c-3 0-5-1-5-5z" fill="#c8cdd0" /><path d="M30 37h14l1 10H28z" fill="#f3f5f6" /><path d="M32 43l3-3 2 3 4-3" stroke="#234" fill="none" /><rect x="26" y="25" width="22" height="9" rx="3" fill="#17191b" /></svg>
);
const Calendar = () => (
  <div className="relative flex size-[50px] flex-col items-center rounded-[11px] bg-[#fafafa] leading-none"><div className="flex h-[15px] w-full items-center rounded-t-[11px] bg-[#f9504a] pl-4 text-[10px] font-semibold text-white"><Fit w={18}>SEP</Fit></div><span className="mt-[1px] text-[31px] font-light text-[#222]">9</span><Badge>1</Badge></div>
);
const Walnut = () => (
  <svg viewBox="0 0 56 56" className="size-14 overflow-visible"><defs><radialGradient id="wa"><stop stopColor="#a08c85" /><stop offset="1" stopColor="#5d5150" /></radialGradient><radialGradient id="gl"><stop stopColor="#fff3a8" /><stop offset=".4" stopColor="#ff9a35" /><stop offset="1" stopColor="#ff6a00" stopOpacity="0" /></radialGradient></defs><path d="M8 22C9 6 22 0 34 1c14 1 22 14 21 27S44 55 31 55 6 40 8 22z" fill="url(#wa)" /><path d="M26 4c7 2 9 15 9 22M34 1c9 8 12 20 11 28M45 6c8 15 7 30 0 44" stroke="#4a3f3d" fill="none" /><path d="M10 22l6 4M20 25l5-2" stroke="#3b2a28" strokeWidth="1.600" /><circle cx="34" cy="32" r="12" fill="url(#gl)" /><path d="M3 26l28 6-6 13-25-5 4-4-4-3 4-3z" fill="#f6f1ea" /><path d="M5 31l22 5M4 36l20 4" stroke="#c8b8a8" /></svg>
);
const WinDown = () => (
  <div className="relative flex size-[50px] items-center justify-center"><svg viewBox="0 0 50 60" className="-mt-1 h-[60px] w-[50px] overflow-visible"><circle cx="25" cy="35" r="23" fill="#fafafa" /><path d="M13 23h11v11H13z" fill="#f35325" /><path d="M25.500 23h11v11h-11z" fill="#81bc06" /><path d="M13 35.500h11v11H13z" fill="#05a6f0" /><path d="M25.500 35.500h11v11h-11z" fill="#ffba08" /><path d="M19.500 0h10v11h6L24.500 21 14 11h5.500z" fill="#5cb860" /></svg><Badge>4</Badge></div>
);
const Trash = () => (
  <svg viewBox="0 0 46 58" className="h-[58px] w-[46px]"><defs><linearGradient id="tr"><stop stopColor="#6a6b6d" /><stop offset=".4" stopColor="#a1a3a4" /><stop offset="1" stopColor="#545557" /></linearGradient></defs><path d="M2 9h42l-5 44c-3 5-29 5-32 0z" fill="url(#tr)" /><path d="M5 9l4-6 6 3 5-5 6 4 6-4 4 5 5 4-8 3-10-1-10 1z" fill="#e3e4e2" /><path d="M11 8l4-3 3 4zM25 6l5-1-2 5z" fill="#374b58" /><path d="M16 9l3-4 3 4z" fill="#35b7c0" /><path d="M33 8l3-2 1 4z" fill="#bb4a36" /><ellipse cx="23" cy="9" rx="21" ry="3.500" fill="none" stroke="#c7c9ca" /></svg>
);

/* icon, running indicator; null is a divider */
const dock = [
  [<Finder />, 1], [<Launchpad />, 0], [<Chrome />, 1], [<Studio />, 0], [<Slack />, 1], [<VSCode />, 1], [<TeamsDock />, 1], [<Sublime />, 1], [<Stickies />, 1], [<TextEdit />, 1],
  [<Terminal />, 0], [<Exec />, 0], [<Reminders />, 0], [<Zoom />, 0], [<Droid />, 0], [<AppStore />, 0], [<Settings />, 0], [<Notes />, 0], [<Safari />, 0], [<Ayat />, 0], [<CleanMac />, 0], [<Activity />, 0],
  null, [<Preview />, 0], [<Calendar />, 0], [<Walnut />, 0], [<WinDown />, 1], null, [<Trash />, 0],
];

function Dock() {
  return (
    <div className="flex h-[84px] shrink-0 items-start bg-[linear-gradient(90deg,#0c031f_0%,#190636_35%,#1d0745_52%,#50086b_61%,#5c0674_72%,#48086b_82%,#25064c_91%,#150233_100%)] pl-[56px] pt-[3px]">
      <div className="flex h-[76px] w-[1808px] rounded-[20px] border border-white/20 bg-white/5 pl-[2px]">
        {dock.map((d, i) =>
          d ? (
            <div key={i} className="relative flex h-[68px] w-[64.600px] shrink-0 items-center justify-center">
              {d[0]}
              {d[1] === 1 && <span className="absolute -bottom-1 left-1/2 size-1 -translate-x-1/2 rounded-full bg-[#b39cc4]" />}
            </div>
          ) : (
            <div key={i} className="flex h-[74px] w-[29px] shrink-0 items-center justify-center"><span className="h-14 w-px bg-white/30" /></div>
          )
        )}
      </div>
    </div>
  );
}

export default function App() {
  return (
    <div className="flex h-[1080px] w-[1920px] flex-col overflow-hidden bg-[#12052b] font-[Inter,sans-serif]">
      <MenuBar />
      <div className="flex h-[972px] shrink-0 flex-col bg-black pt-px">
        <div className="relative flex h-[971px] flex-col overflow-hidden rounded-[10px] border-t border-[#5b5b5e] bg-[#202124]">
          <TabStrip />
          <Toolbar />
          <BookmarkBar />
          <div className="relative flex grow font-['Noto_Sans',sans-serif]">
            <Sidebar />
            <div className="flex grow flex-col">
              <Header />
              <Employees />
            </div>
            <div className="absolute right-5 top-5 z-20 flex h-16 w-[312px] justify-between bg-[#00bf2d] px-2 py-2 font-['Liberation_Sans',sans-serif] text-[16px] leading-6 text-white shadow-[0_0_10px_rgba(0,0,0,0.15)]">
              <div><Fit w={209}>All changes have been saved</Fit><br /><Fit w={91}>successfully!</Fit></div>
              <svg viewBox="0 0 16 16" className="mt-1 size-4" fill="none" stroke="#00a84a"><circle cx="8" cy="8" r="7.500" /><path d="M6 6l4 4M10 6l-4 4" /></svg>
            </div>
            <div className="absolute inset-x-0 bottom-0 h-9 bg-linear-to-b from-transparent to-black/12 [mask-image:linear-gradient(90deg,transparent_1%,#000_9%,#000_91%,transparent_99%)]" />
          </div>
        </div>
      </div>
      <Dock />
    </div>
  );
}
